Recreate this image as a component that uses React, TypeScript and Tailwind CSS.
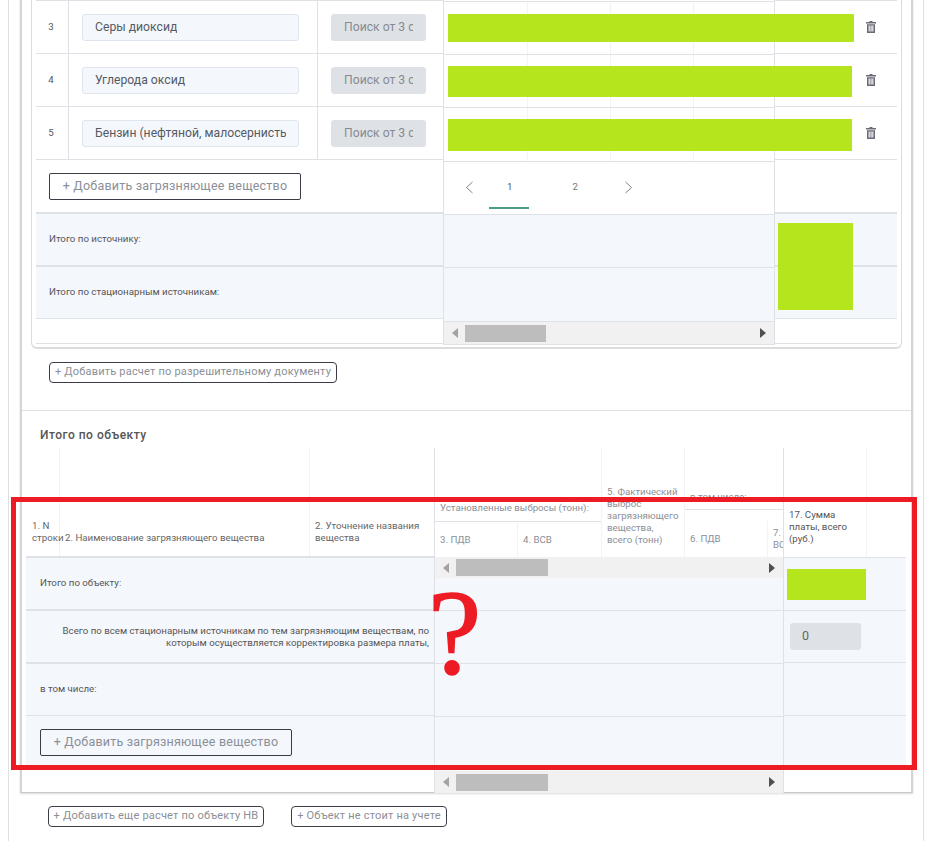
import { ReactNode } from "react";

const rows = [
  { n: 3, name: "Серы диоксид" },
  { n: 4, name: "Углерода оксид" },
  { n: 5, name: "Бензин (нефтяной, малосернистый)" },
];

function TrashIcon() {
  return (
    <svg width="10" height="12" viewBox="0 0 10 12" fill="#6d6a78">
      <path d="M3.5 0h3v1H10v1.5H0V1h3.5z" />
      <path d="M1 3.2h8V12H1zM2.6 4.5v6h1.1v-6zM4.5 4.5v6h1.1v-6zM6.3 4.5v6h1.1v-6z" fillRule="evenodd" />
    </svg>
  );
}

function OutlineButton({ children, className }: { children: ReactNode; className: string }) {
  return (
    <button className={`flex items-center justify-center border border-[#3a3d45] text-[#8b8f97] whitespace-nowrap ${className}`}>
      {children}
    </button>
  );
}

function ScrollBar({ thumbClass, className }: { thumbClass: string; className: string }) {
  return (
    <div className={`flex items-center bg-[#f1f1f1] ${className}`}>
      <svg width="6" height="10" viewBox="0 0 6 10" className="ml-[8px] mr-[7px] shrink-0" fill="#a3a3a3">
        <path d="M6 0v10L0 5z" />
      </svg>
      <div className={`h-[17px] bg-[#bdbdbd] ${thumbClass}`} />
      <svg width="6" height="10" viewBox="0 0 6 10" className="ml-auto mr-[8px] shrink-0" fill="#505050">
        <path d="M0 0v10l6-5z" />
      </svg>
    </div>
  );
}

function MidRow({ className = "", lines = false }: { className?: string; lines?: boolean }) {
  return (
    <div className={`grid h-[53px] grid-cols-[84px_83px_83px_1fr] border-b border-[#dee2e6] ${className}`}>
      {lines && (
        <>
          <div className="border-r border-[#f2f3f5]" />
          <div className="border-r border-[#f2f3f5]" />
          <div className="border-r border-[#f2f3f5]" />
        </>
      )}
    </div>
  );
}

function FirstTable() {
  return (
    <div className="flex">
      <div className="w-[407px] shrink-0 border-t border-[#dee2e6]">
        {rows.map((r) => (
          <div key={r.n} className="flex h-[53px] border-b border-[#dee2e6]">
            <div className="flex w-[33px] items-center justify-center border-r border-[#dee2e6] pr-[2px] text-[9.7px] text-[#555]">
              {r.n}
            </div>
            <div className="flex w-[249px] items-center border-r border-[#dee2e6] pl-[13px]">
              <div className="flex h-[27px] w-[217px] items-center overflow-hidden whitespace-nowrap rounded-[3px] border border-[#dfe5ee] bg-[#f4f7fc] pl-[12px] pr-[12px] text-[12.2px] text-[#555b63]">
                <span className="block overflow-hidden">{r.name}</span>
              </div>
            </div>
            <div className="flex flex-1 items-center pl-[13px]">
              <div className="flex h-[27px] w-[95px] items-center overflow-hidden whitespace-nowrap rounded-[3px] bg-[#dee2e6] px-[13px] text-[12.2px] text-[#868b92]">
                <span className="block overflow-hidden">Поиск от 3 символов</span>
              </div>
            </div>
          </div>
        ))}
        <div className="flex h-[52px] items-center pl-[13px]">
          <OutlineButton className="h-[27px] w-[252px] rounded-[2px] text-[12.5px] tracking-[0.2px]">
            + Добавить загрязняющее вещество
          </OutlineButton>
        </div>
        <div className="flex h-[55px] items-center border-y-2 border-[#dee2e6] bg-[#f4f7fc] pl-[13px] text-[9.7px] text-[#555]">
          Итого по источнику:
        </div>
        <div className="flex h-[52px] items-center border-b border-[#dee2e6] bg-[#f4f7fc] pl-[13px] text-[9.7px] text-[#555]">
          Итого по стационарным источникам:
        </div>
        <div className="h-[25px] border-b border-[#dee2e6]" />
      </div>

      <div className="w-[332px] shrink-0 border-x border-[#dee2e6] pt-[1px]">
        <div className="border-t border-[#dee2e6]">
          <MidRow lines />
          <MidRow lines />
          <MidRow className="h-[54px]" lines />
          <div className="relative h-[53px] border-b border-[#dee2e6] text-[9.7px]">
            <div className="flex h-full items-center pb-[2px] text-[#777]">
              <svg width="9" height="13" viewBox="0 0 9 13" className="ml-[21px]" fill="none" stroke="#777" strokeWidth="0.9">
                <path d="M7.5 1L1.5 6.5l6 5.5" />
              </svg>
              <span className="ml-[33px] text-[#555]">1</span>
              <span className="ml-[60px]">2</span>
              <svg width="9" height="13" viewBox="0 0 9 13" className="ml-[46px]" fill="none" stroke="#777" strokeWidth="0.9">
                <path d="M1.5 1l6 5.5-6 5.5" />
              </svg>
            </div>
            <div className="absolute bottom-[5px] left-[45px] h-[2px] w-[40px] bg-[#4f9a87]" />
          </div>
          <MidRow className="bg-[#f4f7fc]" />
          <MidRow className="h-[54px] bg-[#f4f7fc]" />
          <ScrollBar className="h-[23px] border-b border-[#dee2e6]" thumbClass="w-[81px]" />
        </div>
      </div>

      <div className="flex-1 border-t border-[#dee2e6]">
        {rows.map((r) => (
          <div key={r.n} className="flex h-[53px] items-center border-b border-[#dee2e6] pl-[91px]">
            <TrashIcon />
          </div>
        ))}
        <div className="h-[52px]" />
        <div className="h-[55px] border-y-2 border-[#dee2e6] bg-[#f4f7fc]" />
        <div className="h-[52px] border-b border-[#dee2e6] bg-[#f4f7fc]" />
        <div className="h-[25px] border-b border-[#dee2e6]" />
      </div>
    </div>
  );
}

function SecondTable() {
  return (
    <div className="flex pl-[4px]">
      <div className="w-[408px] shrink-0">
        <div className="flex h-[110px] border-b-2 border-[#dee2e6] text-[9.7px] leading-[12px] text-[#666]">
          <div className="flex w-[34px] shrink-0 items-end border-r border-[#f2f3f5] pb-[12px] pl-[6px]">
            <div>
              1. N
              <br />
              строки
            </div>
          </div>
          <div className="flex w-[250px] shrink-0 items-end border-r border-[#f2f3f5] pb-[12px] pl-[5px]">
            2. Наименование загрязняющего вещества
          </div>
          <div className="flex flex-1 items-end pb-[12px] pl-[5px]">
            <div>
              2. Уточнение названия
              <br />
              вещества
            </div>
          </div>
        </div>
        <div className="flex h-[53px] items-center border-b-2 border-[#dee2e6] bg-[#f4f7fc] pl-[14px] text-[9.7px] text-[#555]">
          Итого по объекту:
        </div>
        <div className="flex h-[53px] items-center justify-end border-b-2 border-[#dee2e6] bg-[#f4f7fc] pr-[5px] text-right text-[9.7px] leading-[12px] text-[#555]">
          <div>
            Всего по всем стационарным источникам по тем загрязняющим веществам, по
            <br />
            которым осуществляется корректировка размера платы,
          </div>
        </div>
        <div className="flex h-[52px] items-center border-b border-[#dee2e6] bg-[#f4f7fc] pl-[14px] text-[9.7px] text-[#555]">
          в том числе:
        </div>
        <div className="flex h-[54px] items-start bg-[#f4f7fc] pl-[14px] pt-[13px]">
          <OutlineButton className="h-[27px] w-[252px] rounded-[2px] text-[12.5px] tracking-[0.2px]">
            + Добавить загрязняющее вещество
          </OutlineButton>
        </div>
      </div>

      <div className="w-[350px] shrink-0 border-x border-[#dee2e6]">
        <div className="flex h-[110px] overflow-hidden border-b border-[#f1f1f1] text-[9.7px] leading-[12px] text-[#8b8f97]">
          <div className="flex w-[166px] shrink-0 flex-col justify-end">
            <div className="flex h-[28px] items-center border-b border-[#dee2e6] pl-[5px]">Установленные выбросы (тонн):</div>
            <div className="flex h-[35px]">
              <div className="flex w-[83px] items-center border-r border-[#f2f3f5] pl-[5px]">3. ПДВ</div>
              <div className="flex items-center pl-[5px]">4. ВСВ</div>
            </div>
          </div>
          <div className="flex w-[84px] shrink-0 items-end border-x border-[#f2f3f5] pb-[11px] pl-[5px]">
            <div className="whitespace-nowrap">
              5. Фактический
              <br />
              выброс
              <br />
              загрязняющего
              <br />
              вещества,
              <br />
              всего (тонн)
            </div>
          </div>
          <div className="flex flex-1 flex-col justify-end">
            <div className="flex h-[27px] items-center whitespace-nowrap border-b border-[#dee2e6] pl-[5px] pt-[1px]">в том числе:</div>
            <div className="flex h-[47px] pt-[11px]">
              <div className="flex w-[83px] shrink-0 items-center border-r border-[#f2f3f5] pl-[5px]">6. ПДВ</div>
              <div className="flex items-center whitespace-nowrap pl-[5px]">
                <div>
                  7.
                  <br />
                  ВСВ
                </div>
              </div>
            </div>
          </div>
        </div>
        <ScrollBar className="h-[20px]" thumbClass="w-[92px] mt-[-1px]" />
        <div className="h-[33px] border-b border-[#dee2e6] bg-[#f4f7fc]" />
        <div className="h-[53px] border-b border-[#dee2e6] bg-[#f4f7fc]" />
        <div className="h-[53px] border-b border-[#dee2e6] bg-[#f4f7fc]" />
        <div className="h-[54px] bg-[#f4f7fc]" />
        <ScrollBar className="h-[22px]" thumbClass="w-[92px]" />
      </div>

      <div className="w-[122px] shrink-0">
        <div className="flex h-[110px] border-b border-[#dee2e6] text-[9.7px] leading-[12px] text-[#555]">
          <div className="flex w-[83px] items-end border-r border-[#f2f3f5] pb-[12px] pl-[5px]">
            <div>
              17. Сумма
              <br />
              платы, всего
              <br />
              (руб.)
            </div>
          </div>
        </div>
        <div className="h-[53px] border-b border-[#dee2e6] bg-[#f4f7fc]" />
        <div className="flex h-[52px] items-center border-b border-[#dee2e6] bg-[#f4f7fc] pl-[6px]">
          <div className="flex h-[27px] w-[71px] items-center rounded-[3px] bg-[#dee2e6] pl-[12px] text-[12.5px] text-[#666]">0</div>
        </div>
        <div className="h-[53px] border-b border-[#dee2e6] bg-[#f4f7fc]" />
        <div className="h-[54px] bg-[#f4f7fc]" />
      </div>
    </div>
  );
}

export default function App() {
  return (
    <div className="relative h-[841px] w-[934px] overflow-hidden bg-white [font-family:Roboto,sans-serif]">
      <div className="ml-[8px] h-full w-[916px] border-x border-[#e0e0e0] pl-[11px]">
        <div className="h-[793px] w-[893px] border-x-2 border-b border-x-[#d4d4d4] border-b-[#c8c8c8] shadow-[0_1px_2px_rgba(0,0,0,0.15)]">
          <div className="ml-[9px] h-[349px] w-[871px] rounded-b-[6px] border-x border-b-2 border-[#dcdcdc] px-[4px]">
            <FirstTable />
          </div>
          <div className="h-[62px] border-b border-[#e0e0e0] pl-[27px] pt-[13px]">
            <OutlineButton className="h-[21px] w-[288px] rounded-[4px] text-[11px] tracking-[0.2px]">
              + Добавить расчет по разрешительному документу
            </OutlineButton>
          </div>
          <div className="flex h-[37px] items-start pl-[18px] pt-[17px] text-[12px] font-medium leading-[14px] tracking-[0.5px] text-[#555]">
            Итого по объекту
          </div>
          <SecondTable />
        </div>
        <div className="flex gap-[27px] pl-[28px] pt-[13px]">
          <OutlineButton className="h-[21px] w-[216px] rounded-[4px] text-[11px] tracking-[0.2px]">
            + Добавить еще расчет по объекту НВ
          </OutlineButton>
          <OutlineButton className="h-[21px] w-[156px] rounded-[4px] text-[11px] tracking-[0.2px]">
            + Объект не стоит на учете
          </OutlineButton>
        </div>
      </div>

      {/* закрашенные значения */}
      <div className="absolute left-[448px] top-[14px] h-[28px] w-[406px] bg-[#b5e61d]" />
      <div className="absolute left-[448px] top-[66px] h-[31px] w-[404px] bg-[#b5e61d]" />
      <div className="absolute left-[448px] top-[119px] h-[32px] w-[404px] bg-[#b5e61d]" />
      <div className="absolute left-[778px] top-[223px] h-[87px] w-[75px] bg-[#b5e61d]" />
      <div className="absolute left-[787px] top-[569px] h-[31px] w-[79px] bg-[#b5e61d]" />

      {/* красная рамка и вопрос */}
      <div className="absolute left-[11px] top-[497px] h-[273px] w-[906px] border-[5px] border-[#ed1c24]" />
      <div className="absolute left-[428px] top-[563px] text-[120px] leading-[140px] text-[#ed1c24] [-webkit-text-stroke:1.5px_#ed1c24] [font-family:'Liberation_Serif',serif]">
        ?
      </div>
    </div>
  );
}
